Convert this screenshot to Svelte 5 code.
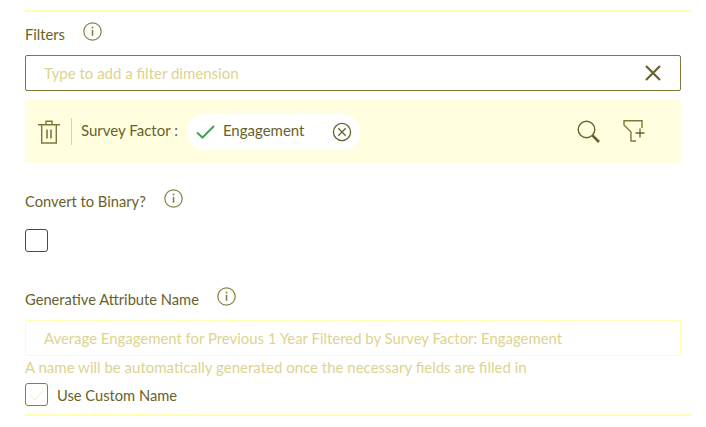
<script lang="ts">
  let customName = $state(false);
  const generatedName = "Average Engagement for Previous 1 Year Filtered by Survey Factor: Engagement";
</script>

{#snippet info()}
  <svg class="info" width="19" height="19" viewBox="0 0 19 19" fill="none" stroke="#86803e">
    <circle cx="9.5" cy="9.5" r="8.7" stroke-width="1.2" />
    <path d="M9.5 8v5.8" stroke-width="1.6" />
    <path d="M9.5 4.6v1.8" stroke-width="1.6" />
  </svg>
{/snippet}

<div class="form">
  <section class="filters">
    <div class="label-row">
      <span class="label">Filters</span>
      {@render info()}
    </div>
    <div class="input-box">
      <span class="placeholder">Type to add a filter dimension</span>
      <svg width="18" height="18" viewBox="0 0 18 18" fill="none" stroke="#67622a" stroke-width="2.2">
        <path d="M2 2l14 14M16 2L2 16" />
      </svg>
    </div>
    <div class="panel">
      <svg class="trash" width="22" height="24" viewBox="0 0 22 24" fill="none" stroke="#7d7838" stroke-width="1.4">
        <path d="M0 4.7h22M8 4.5V1.2h6v3.3M3.7 5v18h14.6V5" />
        <path d="M9 9.5v9M13 9.5v9" stroke-width="1.6" />
      </svg>
      <span class="divider"></span>
      <span class="factor">Survey Factor :</span>
      <div class="pill">
        <svg class="check" width="19" height="14" viewBox="0 0 19 14" fill="none" stroke="#47a05a" stroke-width="2">
          <path d="M1 7.5l5.5 5L18 1" />
        </svg>
        <span class="pill-text">Engagement</span>
        <svg class="pill-x" width="20" height="20" viewBox="0 0 20 20" fill="none" stroke="#67622a" stroke-width="1.3">
          <circle cx="10" cy="10" r="8.6" />
          <path d="M6.3 6.3l7.4 7.4M13.7 6.3l-7.4 7.4" />
        </svg>
      </div>
      <div class="tools">
        <svg width="23" height="23" viewBox="0 0 23 23" fill="none" stroke="#67622a">
          <circle cx="9.5" cy="9.5" r="8.3" stroke-width="1.4" />
          <path d="M15.5 15.5l6.5 6.5" stroke-width="2.6" />
        </svg>
        <svg width="22" height="23" viewBox="0 0 22 23" fill="none" stroke="#7d7838" stroke-width="1.4">
          <path d="M19 8V.7H1V5l7 7v9h5" />
          <path d="M17 8.5v9M12.5 13h9" stroke="#67622a" stroke-width="1.3" />
        </svg>
      </div>
    </div>
  </section>

  <section class="binary">
    <div class="label-row">
      <span class="label">Convert to Binary?</span>
      {@render info()}
    </div>
    <div class="box dark"></div>
  </section>

  <section class="generated">
    <div class="label-row">
      <span class="label">Generative Attribute Name</span>
      {@render info()}
    </div>
    <div class="name-box">{generatedName}</div>
    <div class="hint">A name will be automatically generated once the necessary fields are filled in</div>
    <label class="custom">
      <input type="checkbox" bind:checked={customName} />
      <span class="box light">
        <svg width="18" height="14" viewBox="0 0 18 14" fill="none" stroke="#f6f3e4" stroke-width="1.4">
          <path d="M2 7l5 5L16 2" />
        </svg>
      </span>
      <span class="custom-text">Use Custom Name</span>
    </label>
  </section>
</div>

<style>
  :global(body) {
    background: #ffffff;
  }

  .form {
    width: 666px;
    height: 402px;
    margin: 10px 0 0 25px;
    border-top: 2px solid #ffffb3;
    border-bottom: 2px solid #ffffb3;
    font-family: "Lato", "Open Sans", sans-serif;
    font-size: 15px;
    color: #67622a;
  }

  .label-row {
    display: flex;
    align-items: flex-start;
    gap: 18px;
    height: 24px;
  }

  .label {
    font-size: 14.7px;
    line-height: 20px;
    padding-top: 2px;
  }

  .info {
    flex: none;
  }

  .filters {
    padding-top: 10px;
  }

  .input-box {
    width: 656px;
    height: 36px;
    box-sizing: border-box;
    margin-top: 9px;
    padding: 0 18px;
    border: 1px solid #7d7838;
    border-radius: 2px;
    display: flex;
    align-items: center;
    justify-content: space-between;
  }

  .placeholder,
  .name-box,
  .hint {
    color: #ddd391;
  }

  .panel {
    width: 656px;
    height: 63px;
    box-sizing: border-box;
    margin-top: 9px;
    padding: 0 35px 0 13px;
    background: #ffffdf;
    border-radius: 3px;
    display: flex;
    align-items: center;
  }

  .trash {
    flex: none;
  }

  .divider {
    width: 1px;
    height: 27px;
    margin: 0 9px 0 11px;
    background: #d6d3b4;
  }

  .factor {
    margin: 0 9px 4px 0;
  }

  .pill {
    width: 173px;
    height: 36px;
    box-sizing: border-box;
    padding: 0 8px 0 9px;
    border-radius: 18px;
    background: #ffffff;
    display: flex;
    align-items: center;
  }

  .pill-text {
    margin: 0 0 4px 8px;
  }

  .pill-x {
    margin-left: auto;
    margin-top: 1px;
  }

  .tools {
    margin-left: auto;
    display: flex;
    align-items: center;
    gap: 23px;
    transform: translateX(-1px);
  }

  .binary {
    padding-top: 26px;
  }

  .box {
    width: 23px;
    height: 23px;
    box-sizing: border-box;
    border-radius: 3px;
    display: flex;
    align-items: center;
    justify-content: center;
  }

  .dark {
    margin-top: 16px;
    border: 1px solid #4a4a4a;
  }

  .generated {
    padding-top: 35px;
  }

  .name-box {
    width: 656px;
    height: 36px;
    box-sizing: border-box;
    margin-top: 9px;
    padding: 0 18px;
    border: 1px solid #ffffb3;
    border-radius: 2px;
    font-size: 14.9px;
    display: flex;
    align-items: center;
  }

  .hint {
    line-height: 20px;
    margin-top: 1px;
  }

  .custom {
    display: flex;
    align-items: center;
    gap: 9px;
    margin-top: 6px;
  }

  .custom input {
    display: none;
  }

  .light {
    border: 1px solid #86803e;
  }

  .custom-text {
    font-size: 14.7px;
  }
</style>
